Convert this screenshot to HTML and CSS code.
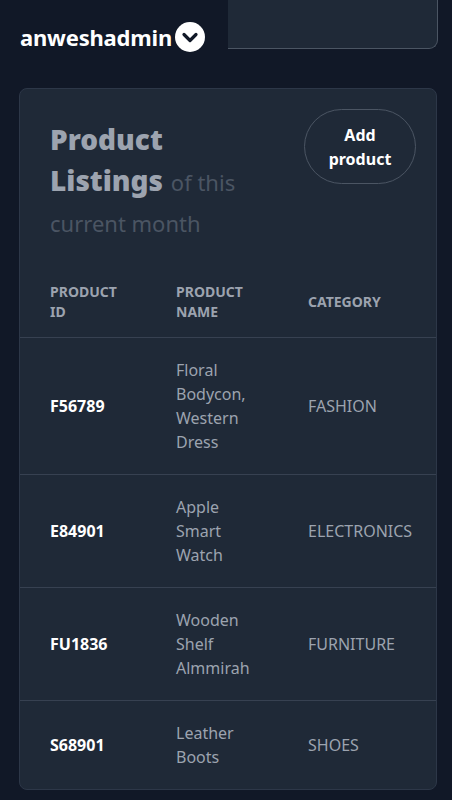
FILE: index.html
```html
<!DOCTYPE html>
<html>
<head>
<meta charset="utf-8">
<link rel="stylesheet" href="styles.css">
</head>
<body>
<header class="topbar">
  <div class="user">
    <span class="username">anweshadmin</span>
    <span class="chev">
      <svg width="30" height="30" viewBox="0 0 30 30"><circle cx="15" cy="15" r="15" fill="#fff"/><path d="M9 12.5 L15 18.5 L21 12.5" fill="none" stroke="#111827" stroke-width="3.2" stroke-linecap="round" stroke-linejoin="round"/></svg>
    </span>
  </div>
  <div class="topbox"></div>
</header>
<main class="card">
  <div class="card-head">
    <h1 class="title"><span class="title-strong">Product Listings</span> <span class="title-sub">of this current month</span></h1>
    <button class="add-btn">Add product</button>
  </div>
  <table class="tbl">
    <colgroup><col class="w1"><col class="w2"><col class="w3"></colgroup>
    <thead>
      <tr><th class="c1">Product ID</th><th class="c2">Product Name</th><th class="c3">Category</th></tr>
    </thead>
    <tbody>
      <tr><td class="id">F56789</td><td class="name">Floral Bodycon, Western Dress</td><td class="cat">FASHION</td></tr>
      <tr><td class="id">E84901</td><td class="name">Apple Smart Watch</td><td class="cat">ELECTRONICS</td></tr>
      <tr><td class="id">FU1836</td><td class="name">Wooden Shelf Almmirah</td><td class="cat">FURNITURE</td></tr>
      <tr><td class="id">S68901</td><td class="name">Leather Boots</td><td class="cat">SHOES</td></tr>
    </tbody>
  </table>
</main>
</body>
</html>
```
FILE: styles.css
```css
* { box-sizing: border-box; }
html, body { margin: 0; padding: 0; }
body {
  background: #111827;
  font-family: "Noto Sans", "Open Sans", sans-serif;
  color: #fff;
  width: 452px;
  height: 800px;
  overflow: hidden;
}
.topbar {
  display: flex;
  align-items: flex-start;
  height: 88px;
}
.user {
  display: flex;
  align-items: center;
  padding: 22px 0 0 20px;
  width: 228px;
}
.username {
  font-size: 22px;
  font-weight: 700;
  letter-spacing: -0.2px;
  line-height: 30px;
}
.chev { display: flex; margin-left: 3px; }
.topbox {
  width: 210px;
  height: 49px;
  background: #1f2937;
  border-right: 1px solid #4b5563;
  border-bottom: 1px solid #4b5563;
  border-bottom-right-radius: 9px;
}
.card {
  margin-left: 19px;
  width: 418px;
  background: #1f2937;
  border: 1px solid #2d3748;
  border-radius: 8px;
  overflow: hidden;
}
.card-head {
  display: flex;
  justify-content: space-between;
  align-items: flex-start;
  padding: 20px 20px 0 30px;
}
.title {
  margin: 12px 0 0;
  width: 200px;
  font-size: 22px;
  line-height: 41px;
  font-weight: 400;
}
.title-strong {
  font-size: 28px;
  font-weight: 900;
  color: #9ca3af;
  line-height: 30px;
  margin-right: 2px;
}
.title-sub {
  font-size: 22px;
  color: #4b5563;
  line-height: 30px;
}
.add-btn {
  width: 112px;
  height: 75px;
  border: 1px solid #4b5563;
  border-radius: 40px;
  background: transparent;
  color: #fff;
  font-family: inherit;
  font-size: 16px;
  font-weight: 700;
  line-height: 24px;
  padding: 0 20px;
}
.tbl {
  border-collapse: collapse;
  table-layout: fixed;
  margin-top: 26px;
  width: 417px;
}
.w1 { width: 156px; }
.w2 { width: 132px; }
.w3 { width: 129px; }
.tbl th, .tbl td { padding-left: 0; padding-right: 0; }
.tbl th.c1, .tbl td.id { padding-left: 30px; padding-right: 50px; }
.tbl th.c2, .tbl td.name { padding-right: 54px; }
.tbl th {
  text-align: left;
  text-transform: uppercase;
  font-size: 14px;
  font-weight: 700;
  color: #9ca3af;
  line-height: 20px;
  padding-top: 12px;
  padding-bottom: 15px;
  vertical-align: middle;
}
.tbl td {
  border-top: 1px solid #374151;
  padding-top: 20px;
  padding-bottom: 20px;
  vertical-align: middle;
  font-size: 16px;
  line-height: 24px;
}
.tbl td.id { font-weight: 700; color: #fff; }
.tbl td.name { color: #9ca3af; }
.tbl td.cat { color: #9ca3af; white-space: nowrap; }
```
